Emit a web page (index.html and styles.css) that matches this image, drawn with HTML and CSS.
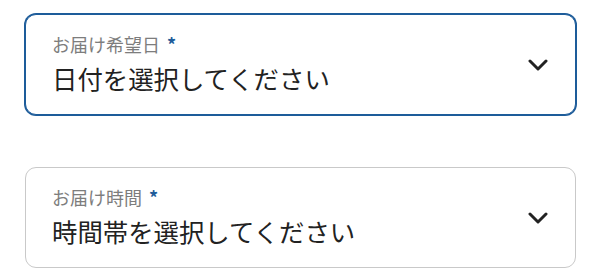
FILE: index.html
```html
<!DOCTYPE html>
<html lang="ja">
<head>
    <meta charset="UTF-8">
    <meta name="viewport" content="width=device-width, initial-scale=1.0">
    <title>お届け日時</title>
    <link rel="stylesheet" href="styles.css">
</head>
<body>
    <div class="delivery-form">
        <div class="select-field is-focused">
            <div class="field-text">
                <div class="field-label">お届け希望日<span class="required">*</span></div>
                <div class="field-value">日付を選択してください</div>
            </div>
            <svg class="chevron" width="20" height="12" viewBox="0 0 20 12">
                <path d="M2 2 L10 10 L18 2" fill="none" stroke="#222" stroke-width="3" stroke-linecap="round" stroke-linejoin="round"/>
            </svg>
        </div>

        <div class="select-field">
            <div class="field-text">
                <div class="field-label">お届け時間<span class="required">*</span></div>
                <div class="field-value">時間帯を選択してください</div>
            </div>
            <svg class="chevron" width="20" height="12" viewBox="0 0 20 12">
                <path d="M2 2 L10 10 L18 2" fill="none" stroke="#222" stroke-width="3" stroke-linecap="round" stroke-linejoin="round"/>
            </svg>
        </div>
    </div>
</body>
</html>
```

FILE: styles.css
```css
/* 基本样式 */
body {
    margin: 0;
    padding: 0;
    background-color: #fff;
    font-family: "Noto Sans CJK JP", "Noto Sans", sans-serif;
}

.delivery-form {
    display: flex;
    flex-direction: column;
    gap: 52px;
    padding: 14px 0 0 25px;
    width: 551px;
}

.select-field {
    display: flex;
    align-items: center;
    justify-content: space-between;
    height: 101px;
    box-sizing: border-box;
    border: 1px solid #c9c9c9;
    border-radius: 11px;
    background-color: #fff;
    padding: 0 27px 0 26px;
}

/* 选中状态 */
.is-focused {
    border-color: #1d5c9a;
    box-shadow: 0 0 0 1px #1d5c9a;
}

.field-text {
    margin-bottom: 3px;
}

.field-label {
    font-size: 18px;
    line-height: 22px;
    color: #7d7d7d;
}

.required {
    color: #1d5c9a;
    font-weight: bold;
    margin-left: 7px;
}

.field-value {
    font-size: 25.4px;
    line-height: 32px;
    color: #222;
    margin-top: 7px;
}

.chevron {
    flex-shrink: 0;
}
```
